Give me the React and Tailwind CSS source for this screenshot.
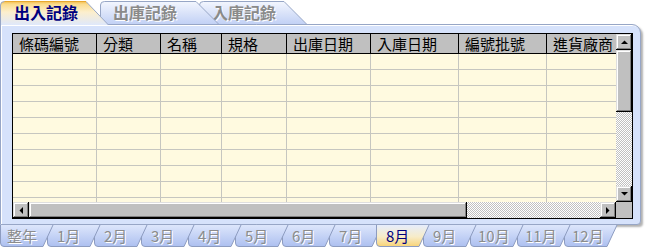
import React from 'react';

const font = "font-['Noto_Sans_CJK_TC','Noto_Sans',sans-serif]";

const columns = [
  { label: '條碼編號', w: 'w-[84px]' },
  { label: '分類', w: 'w-[64px]' },
  { label: '名稱', w: 'w-[61px]' },
  { label: '規格', w: 'w-[65px]' },
  { label: '出庫日期', w: 'w-[84px]' },
  { label: '入庫日期', w: 'w-[88px]' },
  { label: '編號批號', w: 'w-[88px]' },
  { label: '進貨廠商', w: 'w-[80px]' },
];

const rows = [0, 1, 2, 3, 4, 5, 6, 7, 8, 9];

const months = [
  { label: '整年', z: 'z-[13]', pad: 'pl-[7px]' },
  { label: '1月', z: 'z-[12]', pad: 'pl-[10px]' },
  { label: '2月', z: 'z-[11]', pad: 'pl-[10px]' },
  { label: '3月', z: 'z-[10]', pad: 'pl-[10px]' },
  { label: '4月', z: 'z-[9]', pad: 'pl-[10px]' },
  { label: '5月', z: 'z-[8]', pad: 'pl-[10px]' },
  { label: '6月', z: 'z-[7]', pad: 'pl-[10px]' },
  { label: '7月', z: 'z-[6]', pad: 'pl-[10px]' },
  { label: '8月', z: 'z-[20]', pad: 'pl-[10px]', active: true },
  { label: '9月', z: 'z-[4]', pad: 'pl-[10px]' },
  { label: '10月', z: 'z-[3]', pad: 'pl-[8px]' },
  { label: '11月', z: 'z-[2]', pad: 'pl-[8px]' },
  { label: '12月', z: 'z-[1]', pad: 'pl-[8px]' },
];

// 上方頁籤
const TopTab = ({ label, active, flowW, svgW, z, pad, id }) => {
  const h = active ? 25 : 24;
  const shape = `M0.5,${h} L0.5,5 Q0.5,1.5 4.5,1.5 L${svgW - 23},1.5 L${svgW - 0.5},${h}`;
  return (
    <div className={`relative shrink-0 h-[24px] ${flowW} ${z}`}>
      <svg className="absolute left-0 top-0" width={svgW} height={h}>
        <defs>
          <linearGradient id={id} x1="0" y1="0" x2="0" y2="1">
            {active ? (
              <>
                <stop offset="0" stopColor="#f4bf4f" />
                <stop offset="0.12" stopColor="#fbdc8e" />
                <stop offset="0.45" stopColor="#fcefcd" />
                <stop offset="1" stopColor="#dfe8fb" />
              </>
            ) : (
              <>
                <stop offset="0" stopColor="#f3f6fe" />
                <stop offset="1" stopColor="#c2d1f5" />
              </>
            )}
          </linearGradient>
        </defs>
        <path d={shape + ' Z'} fill={`url(#${id})`} />
        <path d={shape} fill="none" stroke="#97a6c6" strokeWidth="1" />
        {active && <path d={`M4.5,1.5 L${svgW - 23},1.5`} stroke="#e8a830" strokeWidth="1" />}
      </svg>
      <span
        className={`relative block ${pad} pt-[1px] text-[16px] leading-[23px] font-bold whitespace-nowrap ${font} ${
          active ? 'text-[#00007f]' : 'text-[#8a8a8a] [text-shadow:1px_1px_0_#ffffff]'
        }`}
      >
        {label}
      </span>
    </div>
  );
};

// 下方月份頁籤
const MonthTab = ({ label, active, z, pad, id }) => {
  const shape = 'M0.5,0 L0.5,18 Q0.5,21.5 4,21.5 L43,21.5 L53,0';
  return (
    <div className={`relative shrink-0 w-[47px] h-[22px] ${z}`}>
      <svg className="absolute left-0 top-0" width="57" height="22">
        <defs>
          <linearGradient id={id} x1="0" y1="0" x2="0" y2="1">
            {active ? (
              <>
                <stop offset="0" stopColor="#e6edfc" />
                <stop offset="0.55" stopColor="#f7ecc8" />
                <stop offset="1" stopColor="#f8d377" />
              </>
            ) : (
              <>
                <stop offset="0" stopColor="#dde6fb" />
                <stop offset="1" stopColor="#adc0f0" />
              </>
            )}
          </linearGradient>
        </defs>
        <path d={shape + ' Z'} fill={`url(#${id})`} />
        <path d={shape} fill="none" stroke="#8d9cc0" strokeWidth="1" />
      </svg>
      <span
        className={`relative block ${pad} text-[15px] leading-[22px] whitespace-nowrap ${font} ${
          active ? 'text-[#00007f]' : 'text-[#8c8c8c] [text-shadow:1px_1px_0_#ffffff]'
        }`}
      >
        {label}
      </span>
    </div>
  );
};

const Btn = ({ className = '', children }) => (
  <div
    className={`shrink-0 bg-[#c0c0c0] shadow-[inset_-1px_-1px_0_#000000,inset_1px_1px_0_#dfdfdf,inset_-2px_-2px_0_#808080,inset_2px_2px_0_#ffffff] flex items-center justify-center ${className}`}
  >
    {children}
  </div>
);

const Arrow = ({ dir }) => {
  const pts = {
    up: '0,4 7,4 3.5,0.5',
    down: '0,0 7,0 3.5,3.5',
    left: '4,0 4,7 0.5,3.5',
    right: '0,0 0,7 3.5,3.5',
  }[dir];
  const vertical = dir === 'up' || dir === 'down';
  return (
    <svg width={vertical ? 7 : 4} height={vertical ? 4 : 7}>
      <polygon points={pts} fill="#000" />
    </svg>
  );
};

const checker =
  '[background-image:repeating-conic-gradient(#c0c0c0_0_25%,#ffffff_0_50%)] [background-size:2px_2px]';

export default function App() {
  return (
    <div className="w-[646px] h-[247px] bg-white overflow-hidden flex flex-col">
      {/* 上方頁籤 */}
      <div className="relative z-10 h-[24px] flex items-start">
        <TopTab label="出入記錄" active flowW="w-[100px]" svgW={109} z="z-30" pad="pl-[14px]" id="tt1" />
        <TopTab label="出庫記錄" flowW="w-[99px]" svgW={119} z="z-20" pad="pl-[13px]" id="tt2" />
        <TopTab label="入庫記錄" flowW="w-[86px]" svgW={108} z="z-10" pad="pl-[13px]" id="tt3" />
      </div>

      {/* 面板 */}
      <div className="relative w-[641px] h-[201px] shrink-0 bg-[#d6e2fb] border border-[#97a6c6] rounded-tr-[9px] rounded-br-[4px] shadow-[2px_2px_2px_rgba(0,0,0,0.3),inset_1px_1px_0_#ffffff] pl-[11px] pt-[8px]">
        <div className="w-[621px] h-[186px] border border-black bg-[#c0c0c0] flex flex-col">
          <div className="flex h-[168px]">
            <div className="w-[603px] overflow-hidden flex flex-col">
              <div className="flex h-[20px] shrink-0 border-b border-black">
                {columns.map((c) => (
                  <div
                    key={c.label}
                    className={`${c.w} shrink-0 h-[19px] bg-[#c0c0c0] border-r border-black pl-[6px] text-[15px] leading-[19px] text-black whitespace-nowrap ${font}`}
                  >
                    {c.label}
                  </div>
                ))}
              </div>
              <div className="flex-1 bg-[#fffae0] overflow-hidden">
                {rows.map((r) => (
                  <div key={r} className="flex h-[16px]">
                    {columns.map((c) => (
                      <div key={c.label} className={`${c.w} shrink-0 h-[16px] border-r border-b border-[#c6c6c0]`} />
                    ))}
                  </div>
                ))}
              </div>
            </div>
            {/* 垂直捲軸 */}
            <div className="w-[16px] flex flex-col">
              <Btn className="h-[16px]">
                <Arrow dir="up" />
              </Btn>
              <Btn className="h-[62px]" />
              <div className={`flex-1 ${checker}`} />
              <Btn className="h-[16px]">
                <Arrow dir="down" />
              </Btn>
            </div>
          </div>
          {/* 水平捲軸 */}
          <div className="flex h-[16px]">
            <Btn className="w-[16px]">
              <Arrow dir="left" />
            </Btn>
            <Btn className="w-[438px]" />
            <div className={`flex-1 ${checker}`} />
            <Btn className="w-[16px]">
              <Arrow dir="right" />
            </Btn>
            <div className="w-[16px] bg-[#c0c0c0]" />
          </div>
        </div>
      </div>

      {/* 下方月份頁籤 */}
      <div className="relative flex items-start h-[22px]">
        {months.map((m, i) => (
          <MonthTab key={m.label} {...m} id={`mt${i}`} />
        ))}
      </div>
    </div>
  );
}
